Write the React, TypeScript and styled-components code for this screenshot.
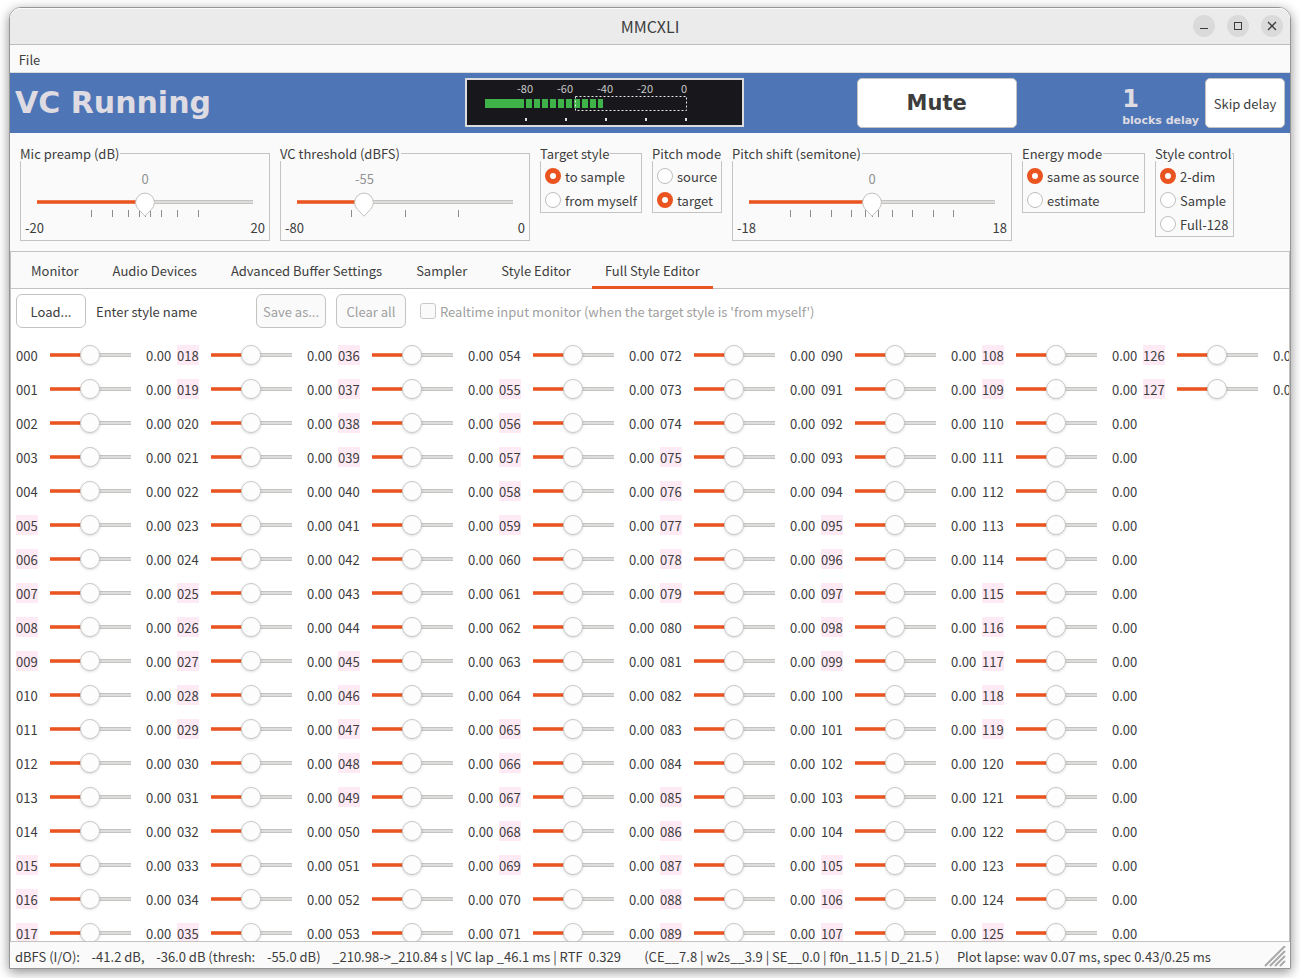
import React, { useState } from 'react';
import styled, { createGlobalStyle, css } from 'styled-components';

const ORANGE = '#e95420';
const LINE = '#c4c3c2';
const TEXT = '#3d3d3d';
const PANEL = '#fafafa';
const UI_FONT = "'Noto Sans CJK JP', 'Noto Sans', sans-serif";
const BOLD_FONT = "'DejaVu Sans', sans-serif";

const GlobalStyle = createGlobalStyle`
  *, *::before, *::after { box-sizing: border-box; }
  html, body { margin: 0; height: 100%; }
  body {
    background: #fff;
    color: ${TEXT};
    font-family: ${UI_FONT};
    font-size: 13px;
    line-height: 20px;
    overflow: hidden;
  }
  button, input { font: inherit; color: inherit; margin: 0; }
`;

const Desktop = styled.div`
  height: 100vh;
  padding: 7px 9px 9px;
  display: flex;
`;

const Window = styled.main`
  flex: 1;
  min-width: 0;
  display: flex;
  flex-direction: column;
  border: 1px solid #969696;
  border-radius: 12px 12px 0 0;
  background: ${PANEL};
  box-shadow: 0 3px 12px rgba(0, 0, 0, 0.45);
`;

const TitleBar = styled.header`
  flex: none;
  height: 37px;
  display: grid;
  grid-template-columns: 1fr auto 1fr;
  align-items: center;
  padding: 0 7px;
  background: #ebebeb;
  border-bottom: 1px solid #bdbdbd;
  border-radius: 11px 11px 0 0;
  box-shadow: inset 0 1px 0 #fbfbfb;
`;

const WindowTitle = styled.h1`
  grid-column: 2;
  margin: 0;
  font-size: 16px;
  line-height: 20px;
  font-weight: 400;
`;

const WindowButtons = styled.div`
  display: flex;
  justify-content: flex-end;
  gap: 12px;
`;

const WindowButton = styled.button`
  width: 22px;
  height: 22px;
  padding: 0;
  border: 0;
  border-radius: 50%;
  background: #dadada;
  svg { display: block; }
`;

const MenuBar = styled.nav`
  flex: none;
  height: 28px;
  padding-left: 8px;
  display: flex;
  align-items: center;
  border-bottom: 1px solid #dcdcdc;
`;

const MenuButton = styled.button`
  padding: 2px 0 0;
  border: 0;
  background: none;
  width: 23px;
`;

const StatusBanner = styled.section`
  flex: none;
  height: 60px;
  padding: 5px;
  display: grid;
  grid-template-columns: 452fr 279px 113fr 160px 106fr auto 80px;
  align-items: start;
  background: #4e76b7;
  color: #dedbe2;
  font-family: ${BOLD_FONT};
  font-weight: 700;
`;

const RunState = styled.div`
  font-size: 30px;
  line-height: 50px;
`;

const Meter = styled.svg`
  display: block;
  font-family: ${UI_FONT};
  font-weight: 400;
  font-size: 11px;
`;

const PushButton = styled.button<{ $tall?: boolean }>`
  height: ${(p) => (p.$tall ? 50 : 34)}px;
  width: ${(p) => (p.$tall ? '100%' : '70px')};
  padding: 2px 0 0;
  border: 1px solid ${LINE};
  border-radius: ${(p) => (p.$tall ? 5 : 6)}px;
  background: #fff;
  color: ${TEXT};
  font-family: ${UI_FONT};
  font-size: 13px;
  font-weight: 400;
  white-space: nowrap;
  &:disabled { background: ${PANEL}; color: #a0a0a0; }
`;

const MuteButton = styled(PushButton)`
  grid-column: 4;
  padding: 0;
  font-family: ${BOLD_FONT};
  font-size: 21px;
  font-weight: 700;
`;

const Delay = styled.div`
  grid-column: 6;
  padding: 7px 6px 0 0;
  font-size: 11px;
  line-height: 16px;
  strong { display: block; font-size: 24px; line-height: 28px; }
`;

const Settings = styled.section`
  flex: none;
  height: 118px;
  padding: 13px 10px 0;
  display: flex;
  align-items: flex-start;
  gap: 10px;
`;

const Group = styled.fieldset<{ $width: number }>`
  flex: 0 1 ${(p) => p.$width}px;
  min-width: 0;
  margin: 0;
  padding: 0;
  border: 1px solid ${LINE};
`;

const Legend = styled.legend`
  margin-left: -1px;
  padding: 0 1px 0 0;
  line-height: 15px;
  background: ${PANEL};
  white-space: nowrap;
`;

const Options = styled.div`
  padding: 3px 0 0 4px;
`;

const Option = styled.label`
  display: flex;
  align-items: center;
  gap: 4px;
  height: 24px;
  white-space: nowrap;
  span { padding-top: 2px; }
`;

const Radio = styled.input.attrs({ type: 'radio' })`
  appearance: none;
  flex: none;
  width: 16px;
  height: 16px;
  border: 1px solid #bfbebd;
  border-radius: 50%;
  background: #fff;
  &:checked { border: 5px solid ${ORANGE}; }
`;

const Check = styled.input.attrs({ type: 'checkbox' })`
  appearance: none;
  flex: none;
  width: 16px;
  height: 16px;
  border: 1px solid #c9c8c7;
  border-radius: 3px;
  background: ${PANEL};
`;

const teardrop = encodeURIComponent(
  "<svg xmlns='http://www.w3.org/2000/svg' width='20' height='25'><path d='M10 24.2 L3.4 17.2 A9.4 9.4 0 1 1 16.6 17.2 Z' fill='#fff' stroke='#c4c0bc'/></svg>"
);

const Slider = styled.input.attrs({ type: 'range' })<{ $fill: number; $inset: number }>`
  appearance: none;
  position: relative;
  display: block;
  width: calc(100% + ${(p) => p.$inset * 2}px);
  margin: 0 -${(p) => p.$inset}px;
  padding-right: 1px;
  height: 20px;
  background:
    linear-gradient(to right, ${ORANGE} ${(p) => p.$fill}%, #dddddc ${(p) => p.$fill}%)
      center / calc(100% - ${(p) => p.$inset * 2}px) 2px no-repeat,
    linear-gradient(to right, #ef7a51 ${(p) => p.$fill}%, #c4c3c1 ${(p) => p.$fill}%)
      center / calc(100% - ${(p) => p.$inset * 2}px) 4px no-repeat;
  &::-webkit-slider-thumb {
    appearance: none;
    width: 20px;
    height: 20px;
    border: 1px solid #c9c8c7;
    border-radius: 50%;
    background: #fdfdfd;
    box-shadow: 0 1px 3px rgba(0, 0, 0, 0.15);
    ${(p) =>
      p.$inset > 0 &&
      css`
        height: 25px;
        margin-top: 5px;
        border: 0;
        border-radius: 0;
        box-shadow: none;
        background: url("data:image/svg+xml,${teardrop}") no-repeat;
      `}
  }
`;

const ScaleBody = styled.div`
  height: 79px;
  padding: 8px 16px 0;
`;

const Rail = styled.div<{ $at: number }>`
  display: grid;
  grid-template-columns: ${(p) => p.$at}fr ${(p) => 100 - p.$at}fr;
  padding-bottom: 3px;
`;

const ScaleValue = styled.output`
  grid-column: 2;
  width: 40px;
  margin-left: -20px;
  text-align: center;
  color: #929292;
  line-height: 20px;
`;

const SliderStack = styled.div`
  position: relative;
  height: 26px;
`;

const Ticks = styled.svg`
  position: absolute;
  left: 0;
  bottom: 1px;
  width: calc(100% - 1px);
  height: 7px;
  overflow: visible;
`;

const Ends = styled.div`
  display: flex;
  justify-content: space-between;
  margin: 0 -12px;
`;

const Tabs = styled.div`
  flex: none;
  height: 38px;
  padding-left: 7px;
  display: flex;
  gap: 8px;
  border: 1px solid ${LINE};
`;

const Tab = styled.button<{ $active?: boolean }>`
  height: 37px;
  padding: 4px 13px 0;
  border: 0;
  border-bottom: 3px solid ${(p) => (p.$active ? ORANGE : 'transparent')};
  background: none;
  white-space: nowrap;
`;

const Editor = styled.section`
  flex: 1;
  min-height: 0;
  padding: 5px 0 0 5px;
  overflow: hidden;
  background: #fff;
  border: solid ${LINE};
  border-width: 0 1px 1px;
`;

const EditorBar = styled.div`
  display: flex;
  align-items: center;
  gap: 10px;
`;

const StyleName = styled.input`
  width: 150px;
  padding: 2px 0 0;
  border: 0;
  background: none;
`;

const MonitorOption = styled(Option)`
  margin-left: 4px;
  color: #a0a0a0;
`;

const Bank = styled.div`
  margin-top: 10px;
  display: grid;
  grid-auto-flow: column;
  grid-template-rows: repeat(18, 34px);
  grid-auto-columns: 155px;
  column-gap: 6px;
`;

const Channel = styled.label`
  display: grid;
  grid-template-columns: 22px 81px 25px;
  column-gap: 12px;
  align-items: center;
  white-space: nowrap;
  output { padding: 2px 0 0 3px; }
`;

const ChannelId = styled.span<{ $pink: boolean }>`
  height: 20px;
  line-height: 22px;
  background: ${(p) => (p.$pink ? '#fdeaf4' : 'transparent')};
`;

const StatusBar = styled.footer`
  flex: none;
  height: 26px;
  padding: 4px 4px 0 5px;
  display: flex;
  justify-content: space-between;
  white-space: pre;
  line-height: 22px;
  svg { display: block; }
`;

type ScaleProps = { label: string; width: number; min: number; max: number; initial: number; marks: number[] };

function Scale({ label, width, min, max, initial, marks }: ScaleProps) {
  const [value, setValue] = useState(initial);
  const percent = (v: number) => ((v - min) / (max - min)) * 100;
  return (
    <Group $width={width}>
      <Legend>{label}</Legend>
      <ScaleBody>
        <Rail $at={percent(value)}>
          <ScaleValue>{value}</ScaleValue>
        </Rail>
        <SliderStack>
          <Ticks aria-hidden="true">
            {marks.map((m) => (
              <rect key={m} x={`${percent(m)}%`} width="1" height="7" fill="#8c8c8c" shapeRendering="crispEdges" />
            ))}
          </Ticks>
          <Slider
            aria-label={label}
            min={min}
            max={max}
            value={value}
            onChange={(e) => setValue(Number(e.target.value))}
            $fill={percent(value)}
            $inset={10}
          />
        </SliderStack>
        <Ends>
          <span>{min}</span>
          <span>{max}</span>
        </Ends>
      </ScaleBody>
    </Group>
  );
}

type ChoiceProps = { label: string; width: number; options: string[]; selected: string };

function Choice({ label, width, options, selected }: ChoiceProps) {
  return (
    <Group $width={width}>
      <Legend>{label}</Legend>
      <Options>
        {options.map((o) => (
          <Option key={o}>
            <Radio name={label} defaultChecked={o === selected} />
            <span>{o}</span>
          </Option>
        ))}
      </Options>
    </Group>
  );
}

function LevelMeter() {
  const segments = Array.from({ length: 10 }, (_, i) => i);
  return (
    <Meter width="279" height="49" role="img" aria-label="Input level">
      <rect x="1" y="1" width="277" height="47" fill="#18181c" stroke="#dcdcdc" strokeWidth="2" />
      {[-80, -60, -40, -20, 0].map((db, i) => (
        <g key={db}>
          <text x={60 + i * 40 - (db === 0 ? 1 : 0)} y="15" textAnchor="middle" fill="#c9c9c9">
            {db}
          </text>
          <rect x={60 + i * 40} y="40" width="2" height="3" fill="#e2e2e2" />
        </g>
      ))}
      <rect x="20" y="21" width="39" height="9" fill="#3fb34a" />
      {segments.map((i) => (
        <rect key={i} x={61 + i * 8} y="21" width={i === 9 ? 5 : 6} height="9" fill="#3fb34a" />
      ))}
      <rect x="110.5" y="18.5" width="111" height="14" fill="none" stroke="#e6e6e6" strokeDasharray="2 2" />
    </Meter>
  );
}

const TABS = ['Monitor', 'Audio Devices', 'Advanced Buffer Settings', 'Sampler', 'Style Editor', 'Full Style Editor'];
const CHANNELS = Array.from({ length: 128 }, (_, i) => i);

function ChannelSlider({ index }: { index: number }) {
  const [value, setValue] = useState(0);
  return (
    <Channel>
      <ChannelId $pink={index % 10 >= 5}>{String(index).padStart(3, '0')}</ChannelId>
      <Slider
        min={-1}
        max={1}
        step={0.01}
        value={value}
        onChange={(e) => setValue(Number(e.target.value))}
        $fill={(value + 1) * 50}
        $inset={0}
      />
      <output>{value.toFixed(2)}</output>
    </Channel>
  );
}

export default function App() {
  const [tab, setTab] = useState('Full Style Editor');
  return (
    <>
      <GlobalStyle />
      <Desktop>
        <Window>
          <TitleBar>
            <WindowTitle>MMCXLI</WindowTitle>
            <WindowButtons>
              <WindowButton aria-label="Minimize">
                <svg width="22" height="22"><path d="M7 13.5h8" stroke="#3a3a3a" /></svg>
              </WindowButton>
              <WindowButton aria-label="Maximize">
                <svg width="22" height="22"><rect x="7.5" y="7.5" width="7" height="7" fill="none" stroke="#3a3a3a" /></svg>
              </WindowButton>
              <WindowButton aria-label="Close">
                <svg width="22" height="22"><path d="M7 7l8 8M15 7l-8 8" stroke="#3a3a3a" strokeWidth="1.3" /></svg>
              </WindowButton>
            </WindowButtons>
          </TitleBar>
          <MenuBar>
            <MenuButton>File</MenuButton>
          </MenuBar>
          <StatusBanner>
            <RunState>VC Running</RunState>
            <LevelMeter />
            <MuteButton $tall>Mute</MuteButton>
            <Delay>
              <strong>1</strong>
              blocks delay
            </Delay>
            <PushButton $tall>Skip delay</PushButton>
          </StatusBanner>
          <Settings>
            <Scale label="Mic preamp (dB)" width={250} min={-20} max={20} initial={0} marks={[-10, -6, -3, -1, 0, 1, 3, 6, 10]} />
            <Scale label="VC threshold (dBFS)" width={250} min={-80} max={0} initial={-55} marks={[-60, -40, -20]} />
            <Choice label="Target style" width={102} options={['to sample', 'from myself']} selected="to sample" />
            <Choice label="Pitch mode" width={70} options={['source', 'target']} selected="target" />
            <Scale label="Pitch shift (semitone)" width={280} min={-18} max={18} initial={0} marks={[-12, -9, -6, -3, -1, 0, 1, 3, 6, 9, 12]} />
            <Choice label="Energy mode" width={123} options={['same as source', 'estimate']} selected="same as source" />
            <Choice label="Style control" width={79} options={['2-dim', 'Sample', 'Full-128']} selected="2-dim" />
          </Settings>
          <Tabs role="tablist">
            {TABS.map((t) => (
              <Tab key={t} role="tab" aria-selected={t === tab} $active={t === tab} onClick={() => setTab(t)}>
                {t}
              </Tab>
            ))}
          </Tabs>
          <Editor>
            <EditorBar>
              <PushButton>Load...</PushButton>
              <StyleName aria-label="Style name" defaultValue="Enter style name" />
              <PushButton disabled>Save as...</PushButton>
              <PushButton disabled>Clear all</PushButton>
              <MonitorOption>
                <Check disabled />
                <span>Realtime input monitor (when the target style is 'from myself')</span>
              </MonitorOption>
            </EditorBar>
            <Bank>
              {CHANNELS.map((i) => (
                <ChannelSlider key={i} index={i} />
              ))}
            </Bank>
          </Editor>
          <StatusBar>
            <span>
              {'dBFS (I/O):    -41.2 dB,    -36.0 dB (thresh:    -55.0 dB)    _210.98->_210.84 s | VC lap _46.1 ms | RTF  0.329        (CE__7.8 | w2s__3.9 | SE__0.0 | f0n_11.5 | D_21.5 )      Plot lapse: wav 0.07 ms, spec 0.43/0.25 ms'}
            </span>
            <svg width="22" height="22" aria-hidden="true">
              <path d="M1 20L21 0M6 20L21 5M11 20L21 10M16 20L21 15" stroke="#a9a9a9" strokeWidth="2" />
            </svg>
          </StatusBar>
        </Window>
      </Desktop>
    </>
  );
}
